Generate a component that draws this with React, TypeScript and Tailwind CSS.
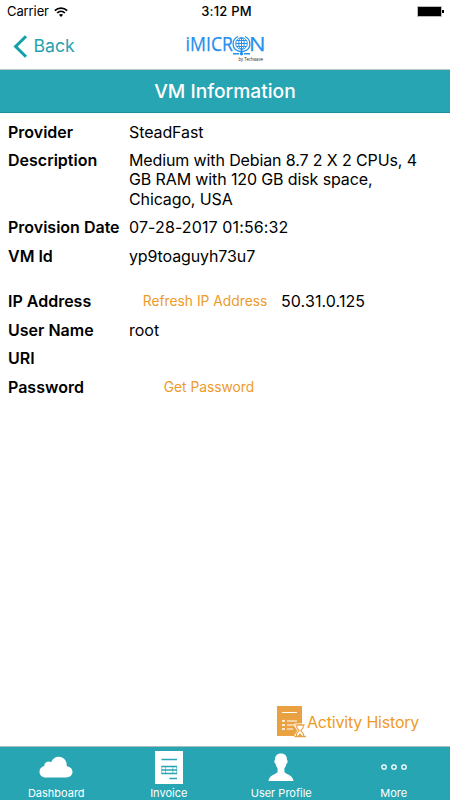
import React from "react";

function Wifi() {
  return (
    <svg width="14" height="10" viewBox="0 0 14 10" fill="none" stroke="#000" strokeWidth="1.7">
      <path d="M0.8 3.7C4.3 0.3 9.7 0.3 13.2 3.7" />
      <path d="M3.1 6C5.3 3.9 8.7 3.9 10.9 6" />
      <path d="M7 9.9L4.9 7.7C6.1 6.7 7.9 6.7 9.1 7.7Z" fill="#000" stroke="none" />
    </svg>
  );
}

function Logo() {
  return (
    <svg width="84" height="42" viewBox="0 -8 84 42" fill="none" className="overflow-visible font-['Open_Sans','Noto_Sans',sans-serif]">
      <g fill="#2490ec" stroke="#2490ec" strokeWidth="0.25" fontSize="20.5">
        <text x="2.5" y="16" textLength="47.5" lengthAdjust="spacingAndGlyphs">iMICR</text>
        <text x="66" y="16" textLength="16.5" lengthAdjust="spacingAndGlyphs">N</text>
      </g>
      <g stroke="#2490ec" strokeWidth="1">
        <circle cx="58.500" cy="8.500" r="5.800" />
        <ellipse cx="58.500" cy="8.500" rx="2.700" ry="5.800" />
        <path d="M58.500 2.500v14M53 8.500h11M54 5.500h9M54 11.500h9" />
        <path d="M55 1.500C48.500 4.500 48.500 13.500 55 15.800Q58.500 17 62 15.800C68.500 13.500 68.500 4.500 62 1.500" strokeWidth="1.300" />
        <path d="M58.500 15v3M50 18.700h6M61 18.700h6" strokeWidth="1.500" />
      </g>
      <circle cx="58.500" cy="18.700" r="1.700" fill="#2490ec" />
      <text x="55.5" y="25.800" fill="#222" fontSize="5.800" fontWeight="500" textLength="24.500" lengthAdjust="spacingAndGlyphs">by Techwave</text>
    </svg>
  );
}

function Row({ label, children, className = "" }: { label: string; children?: React.ReactNode; className?: string }) {
  return (
    <div className={`flex items-start ${className}`}>
      <dt className="w-[121px] shrink-0 whitespace-nowrap text-[16px] font-semibold">{label}</dt>
      <dd className="whitespace-pre text-[16px]">{children}</dd>
    </div>
  );
}

function Tab({ label, children }: { label: string; children: React.ReactNode }) {
  return (
    <button className="flex flex-1 flex-col items-center">
      <span className="flex h-[37px] items-center pt-[3px]">{children}</span>
      <span className="mt-[2px] text-[11px] leading-[14px]">{label}</span>
    </button>
  );
}

export default function App() {
  return (
    <div className="flex h-[800px] w-[450px] flex-col overflow-hidden bg-white font-['Inter','Liberation_Sans',sans-serif] text-black">
      <div className="grid h-[23px] grid-cols-3 items-center pl-[7px] pr-[6px] text-[13px]">
        <div className="flex items-center gap-[5px] tracking-[-0.1px]"><span>Carrier</span><Wifi /></div>
        <div className="pl-[2px] text-center font-medium tracking-[0.2px]">3:12 PM</div>
        <div className="flex items-center justify-end">
          <div className="h-[11px] w-[25px] rounded-[1px] border border-[#bbb] bg-black" />
          <div className="h-[3px] w-[2px] bg-black" />
        </div>
      </div>
      <nav className="grid h-[47px] grid-cols-3 border-b border-[#bcc8c8]">
        <button className="flex items-center pl-[13px] text-[#25a2b1]">
          <svg width="15" height="23" viewBox="0 0 15 23" fill="none" stroke="#129fac" strokeWidth="3"><path d="M13 1.2L2.6 11.5L13 21.8" /></svg>
          <span className="ml-[5.5px] text-[17.7px]">Back</span>
        </button>
        <div className="flex items-start justify-center pt-[4px]"><Logo /></div>
      </nav>
      <h1 className="flex h-[43px] items-center justify-center border-b border-[#188f9c] bg-[#28a5b2] pt-[1px] text-[19.2px] font-medium text-white">VM Information</h1>
      <dl className="flex flex-col gap-[9px] pl-[8px] pt-[9.5px] leading-[19.4px]">
        <Row label="Provider"><span className="tracking-[-0.1px]">SteadFast</span></Row>
        <Row label="Description"><span className="tracking-[-0.12px]">{"Medium with Debian 8.7 2 X 2 CPUs, 4\nGB RAM with 120 GB disk space,\nChicago, USA"}</span></Row>
        <Row label="Provision Date"><span className="tracking-[0.12px]">07-28-2017 01:56:32</span></Row>
        <Row label="VM Id"><span className="tracking-[-0.12px]">yp9toaguyh73u7</span></Row>
        <Row label="IP Address" className="mt-[17.5px]">
          <div className="flex"><button className="w-[152px] text-[13.8px] text-[#ee9a29]">Refresh IP Address</button><span className="tracking-[0.1px]">50.31.0.125</span></div>
        </Row>
        <Row label="User Name">root</Row>
        <Row label="URI" />
        <Row label="Password"><div className="flex"><button className="w-[160px] text-[13.8px] text-[#ee9a29]">Get Password</button></div></Row>
      </dl>
      <div className="mt-auto flex items-center pb-[8px] pl-[276px] text-[#ee9a29]">
        <svg width="31" height="34" viewBox="0 0 31 34" className="shrink-0">
          <path d="M1 2h25v30H1z" fill="#eaa141" />
          <path d="M6 8.500h15M11 17h10M11 21h8M11 25h6" stroke="#fff" strokeWidth="1.200" />
          <path d="M6 17h3M6 21h3M6 25h3" stroke="#fff" strokeWidth="1.500" />
          <path d="M18.500 19.500h11v3l-3 4.300 3 4.200v2h-11v-2l3-4.200-3-4.300z" fill="#fff" />
          <path d="M19.500 21h9M18.500 32.500h11.500" stroke="#eaa141" strokeWidth="1.400" />
          <path d="M20.800 21.500v2l2.400 3.200-2.700 3.300v2M27.200 21.500v2l-2.400 3.200 2.700 3.300v2" fill="none" stroke="#eaa141" strokeWidth="1.100" />
          <path d="M21.800 32l2.200-3 2.200 3z" fill="#eaa141" />
        </svg>
        <button className="whitespace-nowrap pt-[1px] text-[16px] tracking-[-0.2px]">Activity History</button>
      </div>
      <footer className="flex h-[54px] shrink-0 border-t border-[#a9bdbd] bg-[#28a5b2] text-white">
        <Tab label="Dashboard">
          <svg width="34" height="22" viewBox="0 0 34 22" fill="#fff"><path d="M7 21.5C3 21.5.5 19 .5 15.7c0-3 2-5 4.8-5.6C5 6.500 9.200 4.200 12 6.300 13.500 2.600 16.200.7 19.500.7c4.800 0 8.200 3.500 8.200 8.200v1.300c3.300.4 5.800 2.500 5.800 5.600 0 3.500-2.800 5.700-6.200 5.700z" /></svg>
        </Tab>
        <Tab label="Invoice">
          <svg width="28" height="33" viewBox="0 0 28 33"><path d="M0 0h28v33H0z" fill="#fff" /><path d="M6.500 8.500h15.500M6.500 15.500h15.500M6.500 19h15.500M6.500 22.500h15.500M14.500 27.500h7.500" stroke="#28a5b2" strokeWidth="1.500" /><path d="M6.800 15v8M10.500 15v8M17.800 15v8M21.700 15v8" fill="none" stroke="#28a5b2" strokeWidth="0.600" /></svg>
        </Tab>
        <Tab label="User Profile">
          <svg width="26" height="28" viewBox="0 0 26 28" fill="#fff"><path d="M13 .5c4.200 0 6 2.500 6 6.500 1 .2.9 3.200-.6 3.800-.4 2.200-1 3.400-2 4.400v3.500c1 3 8.600 2.700 9.100 9.300H.5c.5-6.600 8.100-6.300 9.100-9.300v-3.500c-1-1-1.600-2.200-2-4.400C6.100 10.200 6 7.200 7 7c0-4 1.800-6.500 6-6.500z" /></svg>
        </Tab>
        <Tab label="More">
          <svg width="26" height="8" viewBox="0 0 26 8" fill="none" stroke="#fff" strokeWidth="1.3"><circle cx="3" cy="4" r="2.200" /><circle cx="13" cy="4" r="2.200" /><circle cx="23" cy="4" r="2.200" /></svg>
        </Tab>
      </footer>
    </div>
  );
}
